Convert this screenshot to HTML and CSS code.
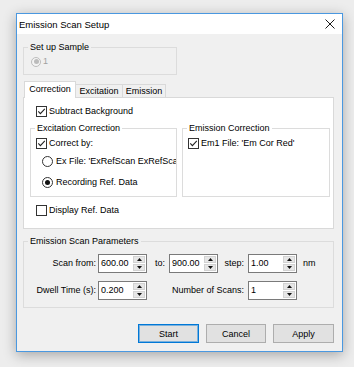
FILE: index.html
```html
<!DOCTYPE html>
<html lang="en">
<head>
    <meta charset="UTF-8">
    <title>Emission Scan Setup</title>
    <link rel="stylesheet" href="styles.css">
</head>
<body>
    <div class="window">
        <div class="titlebar">
            <span class="title">Emission Scan Setup</span>
            <svg class="close" width="10" height="10" viewBox="0 0 10 10"><path d="M0.5 0.5L9.5 9.5M9.5 0.5L0.5 9.5" stroke="#1a1a1a" stroke-width="1"/></svg>
        </div>

        <div class="content">
            <!-- Sample -->
            <fieldset class="group sample">
                <legend>Set up Sample</legend>
                <div class="group-body">
                    <div class="option disabled"><span class="radio on"></span><span>1</span></div>
                </div>
            </fieldset>

            <!-- Tabs -->
            <div class="tabs">
                <span class="tab-edge"></span>
                <span class="tab active">Correction</span>
                <span class="tab">Excitation</span>
                <span class="tab last">Emission</span>
                <span class="tab-fill"></span>
            </div>
            <div class="tab-panel">
                <div class="option indent">
                    <span class="check"><svg width="9" height="9" viewBox="0 0 9 9"><polyline points="1.3,4.3 3.4,6.6 7.8,1.8" fill="none" stroke="#222" stroke-width="1.1"/></svg></span>
                    <span>Subtract Background</span>
                </div>

                <div class="corrections">
                    <fieldset class="group">
                        <legend>Excitation Correction</legend>
                        <div class="group-body">
                            <div class="option">
                                <span class="check"><svg width="9" height="9" viewBox="0 0 9 9"><polyline points="1.3,4.3 3.4,6.6 7.8,1.8" fill="none" stroke="#222" stroke-width="1.1"/></svg></span>
                                <span>Correct by:</span>
                            </div>
                            <div class="option sub first">
                                <span class="radio"></span>
                                <span class="clip">Ex File: 'ExRefScan ExRefScan'</span>
                            </div>
                            <div class="option sub second">
                                <span class="radio on"></span>
                                <span>Recording Ref. Data</span>
                            </div>
                        </div>
                    </fieldset>
                    <fieldset class="group">
                        <legend>Emission Correction</legend>
                        <div class="group-body">
                            <div class="option">
                                <span class="check"><svg width="9" height="9" viewBox="0 0 9 9"><polyline points="1.3,4.3 3.4,6.6 7.8,1.8" fill="none" stroke="#222" stroke-width="1.1"/></svg></span>
                                <span>Em1 File: 'Em Cor Red'</span>
                            </div>
                        </div>
                    </fieldset>
                </div>

                <div class="option indent display">
                    <span class="check"></span>
                    <span>Display Ref. Data</span>
                </div>
            </div>

            <!-- Scan parameters -->
            <fieldset class="group params">
                <legend>Emission Scan Parameters</legend>
                <div class="param-grid">
                    <span class="lbl">Scan from:</span>
                    <div class="spin"><span class="val">600.00</span><span class="spin-btns"><span class="up"><svg width="5" height="3" viewBox="0 0 5 3"><path d="M0 3L2.5 0L5 3Z" fill="#111"/></svg></span><span class="down"><svg width="5" height="3" viewBox="0 0 5 3"><path d="M0 0L2.5 3L5 0Z" fill="#111"/></svg></span></span></div>
                    <span class="lbl">to:</span>
                    <div class="spin"><span class="val">900.00</span><span class="spin-btns"><span class="up"><svg width="5" height="3" viewBox="0 0 5 3"><path d="M0 3L2.5 0L5 3Z" fill="#111"/></svg></span><span class="down"><svg width="5" height="3" viewBox="0 0 5 3"><path d="M0 0L2.5 3L5 0Z" fill="#111"/></svg></span></span></div>
                    <span class="lbl">step:</span>
                    <div class="spin"><span class="val">1.00</span><span class="spin-btns"><span class="up"><svg width="5" height="3" viewBox="0 0 5 3"><path d="M0 3L2.5 0L5 3Z" fill="#111"/></svg></span><span class="down"><svg width="5" height="3" viewBox="0 0 5 3"><path d="M0 0L2.5 3L5 0Z" fill="#111"/></svg></span></span></div>
                    <span class="unit">nm</span>

                    <span class="lbl">Dwell Time (s):</span>
                    <div class="spin"><span class="val">0.200</span><span class="spin-btns"><span class="up"><svg width="5" height="3" viewBox="0 0 5 3"><path d="M0 3L2.5 0L5 3Z" fill="#111"/></svg></span><span class="down"><svg width="5" height="3" viewBox="0 0 5 3"><path d="M0 0L2.5 3L5 0Z" fill="#111"/></svg></span></span></div>
                    <span class="lbl wide">Number of Scans:</span>
                    <div class="spin"><span class="val">1</span><span class="spin-btns"><span class="up"><svg width="5" height="3" viewBox="0 0 5 3"><path d="M0 3L2.5 0L5 3Z" fill="#111"/></svg></span><span class="down"><svg width="5" height="3" viewBox="0 0 5 3"><path d="M0 0L2.5 3L5 0Z" fill="#111"/></svg></span></span></div>
                </div>
            </fieldset>

            <div class="buttons">
                <button class="btn default">Start</button>
                <button class="btn cancel">Cancel</button>
                <button class="btn">Apply</button>
            </div>
        </div>
    </div>
</body>
</html>
```

FILE: styles.css
```css
* {
    box-sizing: border-box;
}
body {
    margin: 0;
    padding: 13px 0 0 16px;
    min-height: 367px;
    background-color: #ededed;
    font-family: "Liberation Sans", Arial, sans-serif;
    font-size: 9px;
    line-height: 11px;
    color: #000;
}
.window {
    width: 327px;
    height: 339px;
    border: 1px solid #4a98e0;
    background-color: #f0f0f0;
    box-shadow: 0 3px 12px rgba(0, 0, 0, 0.3);
}
.titlebar {
    height: 20px;
    background-color: #fff;
    display: flex;
    align-items: center;
    justify-content: space-between;
    padding: 0 7px 0 2px;
}
.title {
    font-size: 9.5px;
}
.content {
    padding-left: 6px;
}

/* group boxes */
.group {
    margin: 0;
    padding: 0;
    min-width: 0;
    border: 1px solid #dcdcdc;
}
.group legend {
    margin-left: 4px;
    padding: 0 2px;
    line-height: 11px;
}
.group-body {
    padding: 4px 0 8px 5px;
}
.sample {
    width: 154px;
    margin-top: 8px;
}
.sample .group-body {
    padding: 3px 0 7px 7px;
}

/* options */
.option {
    display: flex;
    align-items: center;
    height: 11px;
    gap: 2px;
    white-space: nowrap;
}
.option.sub {
    gap: 3px;
    margin-left: 6px;
}
.option.first {
    margin-top: 7px;
}
.option.second {
    margin-top: 10px;
}
.option.indent {
    margin-left: 6px;
}
.option.display {
    margin-top: 8px;
}
.clip {
    overflow: hidden;
    min-width: 0;
}
.check {
    width: 11px;
    height: 11px;
    flex: none;
    border: 1px solid #333;
    background-color: #fff;
    display: flex;
    align-items: center;
    justify-content: center;
}
.radio {
    width: 11px;
    height: 11px;
    flex: none;
    border: 1px solid #333;
    border-radius: 50%;
    background-color: #fff;
    display: flex;
    align-items: center;
    justify-content: center;
}
.radio.on::after {
    content: "";
    width: 5px;
    height: 5px;
    border-radius: 50%;
    background-color: #111;
}
.disabled {
    color: #a0a0a0;
}
.disabled .radio {
    width: 10px;
    height: 10px;
    border-color: #bcbcbc;
    background-color: #f4f4f4;
}
.disabled .radio.on::after {
    background-color: #bcbcbc;
}

/* tabs */
.tabs {
    display: flex;
    align-items: flex-end;
    width: 311px;
    height: 17px;
    margin-top: 6px;
}
.tab-edge {
    width: 1px;
    height: 1px;
    border-bottom: 1px solid #d9d9d9;
}
.tab {
    height: 14px;
    padding-top: 1px;
    text-align: center;
    border-top: 1px solid #d9d9d9;
    border-right: 1px solid #d9d9d9;
    border-bottom: 1px solid #d9d9d9;
    background-color: #f0f0f0;
}
.tab.active {
    width: 52px;
    height: 17px;
    padding-top: 2px;
    border: 1px solid #d9d9d9;
    border-bottom: none;
    background-color: #fff;
}
.tab:nth-child(3) {
    width: 47px;
}
.tab.last {
    width: 43px;
}
.tab-fill {
    flex: 1;
    height: 1px;
    border-bottom: 1px solid #d9d9d9;
}
.tab-panel {
    width: 311px;
    padding: 8px 0 12px 6px;
    background-color: #fff;
    border: 1px solid #d9d9d9;
    border-top: none;
}
.corrections {
    display: grid;
    grid-template-columns: 147px 148px;
    column-gap: 5px;
    margin-top: 6px;
}

/* parameters */
.params {
    width: 311px;
    margin-top: 7px;
}
.param-grid {
    display: grid;
    grid-template-columns: 74px 49px 22px 49px 30px 49px auto;
    grid-template-rows: 19px 19px;
    row-gap: 8px;
    padding: 7px 0 7px 0;
    align-items: center;
}
.lbl {
    text-align: right;
    padding-right: 4px;
    white-space: nowrap;
}
.param-grid .lbl:first-child,
.param-grid .spin + .unit + .lbl {
    padding-right: 2px;
}
.lbl.wide {
    grid-column: 3 / 6;
}
.unit {
    padding-left: 6px;
}
.spin {
    height: 19px;
    display: flex;
    border: 1px solid #7a7a7a;
    background-color: #fff;
}
.val {
    flex: 1;
    padding-left: 2px;
    line-height: 17px;
}
.spin-btns {
    width: 12px;
    margin: 1px 1px 1px 0;
    display: flex;
    flex-direction: column;
    gap: 1px;
}
.spin-btns span {
    flex: 1;
    display: flex;
    align-items: center;
    justify-content: center;
    background-color: #e6e6e6;
    border: 1px solid #d2d2d2;
}

/* buttons */
.buttons {
    width: 311px;
    display: flex;
    justify-content: flex-end;
    gap: 7px;
    margin-top: 16px;
}
.btn {
    width: 61px;
    height: 19px;
    padding: 0;
    font-family: "Liberation Sans", Arial, sans-serif;
    font-size: 9px;
    color: #000;
    background-color: #e1e1e1;
    border: 1px solid #adadad;
}
.btn.cancel {
    width: 60px;
}
.btn.default {
    border-color: #0078d7;
    box-shadow: inset 0 0 0 1px rgba(0, 120, 215, 0.45);
}
```
